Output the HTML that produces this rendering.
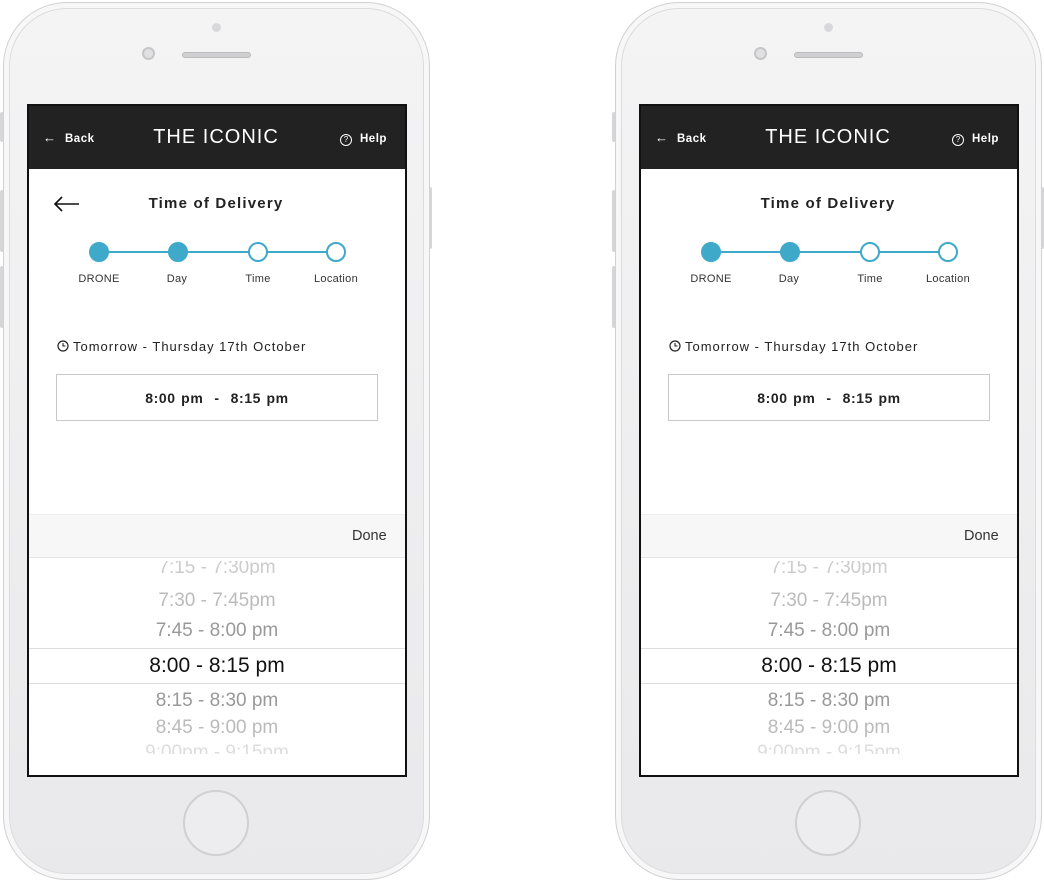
<!DOCTYPE html>
<html><head><style>
*{margin:0;padding:0;box-sizing:border-box}
body{width:1044px;height:883px;background:#fff;position:relative;overflow:hidden;font-family:"Liberation Sans",sans-serif}
.ph{position:absolute;top:0;width:432px;height:883px}
.body{position:absolute;left:3px;top:2px;width:427px;height:878px;border-radius:64px;background:linear-gradient(#f4f4f5,#e9e9eb);border:1px solid #d2d2d4;box-shadow:inset 0 0 0 5px #f7f7f8,inset 0 0 0 6px #dcdcde}
.btn{position:absolute;width:4px;background:#d6d6d8;border-radius:2px}
.scr{position:absolute;left:27px;top:104px;width:380px;height:673px;background:#fff;border:2px solid #111;overflow:hidden}
.hd{position:absolute;left:0;top:0;width:376px;height:63px;background:#222;color:#fff}
.a{position:absolute;white-space:nowrap}
.c{transform:translateX(-50%)}
.dot{position:absolute;width:20px;height:20px;border-radius:50%;border:2px solid #3fa9c9;background:#fff;top:136px}
.f{background:#3fa9c9}
.lbl{position:absolute;top:167px;font-size:11px;color:#333;transform:translateX(-50%);letter-spacing:.3px}
.pk{position:absolute;left:0;width:376px;text-align:center;font-size:19px;color:#aaa}
</style></head><body>

<div class="ph" style="left:0">
<div class="btn" style="left:0;top:112px;height:30px"></div>
<div class="btn" style="left:0;top:190px;height:62px"></div>
<div class="btn" style="left:0;top:266px;height:62px"></div>
<div class="btn" style="left:428px;top:187px;height:62px"></div>
<div class="body"></div>
<div class="a" style="left:212px;top:23px;width:9px;height:9px;border-radius:50%;background:#d8d8da"></div>
<div class="a" style="left:142px;top:47px;width:13px;height:13px;border-radius:50%;background:#e0e0e2;border:2px solid #c6c6c8"></div>
<div class="a" style="left:182px;top:52px;width:69px;height:6px;border-radius:3px;background:#d0d0d2;border:1px solid #bbb"></div>
<div class="a" style="left:183px;top:790px;width:66px;height:66px;border-radius:50%;border:2px solid #d0d0d2;background:#ededef"></div>
<div class="scr">
 <div class="hd">
  <div class="a" style="left:14px;top:24px;font-size:13px">&#8592;</div>
  <div class="a" style="left:36px;top:27px;font-size:11.5px;font-weight:bold;letter-spacing:.5px">Back</div>
  <div class="a c" style="left:187px;top:20px;font-size:20px;letter-spacing:1px">THE ICONIC</div>
  <div class="a" style="left:311px;top:28px;width:12px;height:12px;border-radius:50%;border:1px solid #fff;font-size:8px;text-align:center;line-height:10px">?</div>
  <div class="a" style="left:331px;top:27px;font-size:11.5px;font-weight:bold;letter-spacing:.5px">Help</div>
 </div>
 <svg class="a" style="left:24px;top:90px" width="28" height="16"><path d="M2 8H26M9 1L2 8l7 7" stroke="#111" stroke-width="1.6" fill="none"/></svg>
 <div class="a c" style="left:187px;top:89px;font-size:15px;font-weight:bold;color:#222;letter-spacing:1.2px">Time of Delivery</div>
 <div class="a" style="left:70px;top:145px;width:237px;height:2px;background:#3fa9c9"></div>
 <div class="dot f" style="left:60px"></div><div class="dot f" style="left:139px"></div>
 <div class="dot" style="left:219px"></div><div class="dot" style="left:297px"></div>
 <div class="lbl" style="left:70px">DRONE</div><div class="lbl" style="left:148px">Day</div>
 <div class="lbl" style="left:229px">Time</div><div class="lbl" style="left:307px">Location</div>
 <svg class="a" style="left:28px;top:234px" width="12" height="12"><circle cx="6" cy="6" r="5" stroke="#222" stroke-width="1.2" fill="none"/><path d="M6 3v3h2.5" stroke="#222" stroke-width="1.1" fill="none"/></svg>
 <div class="a" style="left:44px;top:233px;font-size:13px;color:#222;letter-spacing:1px">Tomorrow - Thursday 17th October</div>
 <div class="a" style="left:27px;top:268px;width:322px;height:47px;border:1px solid #c8c8c8"></div>
 <div class="a c" style="left:188px;top:284px;font-size:14px;font-weight:bold;color:#222;letter-spacing:.6px;word-spacing:1px">8:00 pm &nbsp;- &nbsp;8:15 pm</div>
 <div class="a" style="left:0;top:408px;width:376px;height:44px;background:#f7f7f7;border-top:1px solid #eee;border-bottom:1px solid #e4e4e4"></div>
 <div class="a" style="left:323px;top:422px;font-size:14.5px;color:#333">Done</div>
 <div class="pk" style="top:455px;color:#ccc;height:14px;overflow:hidden"><div style="margin-top:-4px">7:15 - 7:30pm</div></div>
 <div class="pk" style="top:484px;color:#bbb">7:30 - 7:45pm</div>
 <div class="pk" style="top:514px;color:#999">7:45 - 8:00 pm</div>
 <div class="a" style="left:0;top:542px;width:376px;height:1px;background:#ddd"></div>
 <div class="pk" style="top:548px;color:#111;font-size:21px">8:00 - 8:15 pm</div>
 <div class="a" style="left:0;top:577px;width:376px;height:1px;background:#ddd"></div>
 <div class="pk" style="top:584px;color:#999">8:15 - 8:30 pm</div>
 <div class="pk" style="top:611px;color:#bbb">8:45 - 9:00 pm</div>
 <div class="pk" style="top:636px;color:#ddd;height:12px;overflow:hidden">9:00pm - 9:15pm</div>
</div>
</div>

<div class="ph" style="left:612px">
<div class="btn" style="left:0;top:112px;height:30px"></div>
<div class="btn" style="left:0;top:190px;height:62px"></div>
<div class="btn" style="left:0;top:266px;height:62px"></div>
<div class="btn" style="left:428px;top:187px;height:62px"></div>
<div class="body"></div>
<div class="a" style="left:212px;top:23px;width:9px;height:9px;border-radius:50%;background:#d8d8da"></div>
<div class="a" style="left:142px;top:47px;width:13px;height:13px;border-radius:50%;background:#e0e0e2;border:2px solid #c6c6c8"></div>
<div class="a" style="left:182px;top:52px;width:69px;height:6px;border-radius:3px;background:#d0d0d2;border:1px solid #bbb"></div>
<div class="a" style="left:183px;top:790px;width:66px;height:66px;border-radius:50%;border:2px solid #d0d0d2;background:#ededef"></div>
<div class="scr">
 <div class="hd">
  <div class="a" style="left:14px;top:24px;font-size:13px">&#8592;</div>
  <div class="a" style="left:36px;top:27px;font-size:11.5px;font-weight:bold;letter-spacing:.5px">Back</div>
  <div class="a c" style="left:187px;top:20px;font-size:20px;letter-spacing:1px">THE ICONIC</div>
  <div class="a" style="left:311px;top:28px;width:12px;height:12px;border-radius:50%;border:1px solid #fff;font-size:8px;text-align:center;line-height:10px">?</div>
  <div class="a" style="left:331px;top:27px;font-size:11.5px;font-weight:bold;letter-spacing:.5px">Help</div>
 </div>
 <div class="a c" style="left:187px;top:89px;font-size:15px;font-weight:bold;color:#222;letter-spacing:1.2px">Time of Delivery</div>
 <div class="a" style="left:70px;top:145px;width:237px;height:2px;background:#3fa9c9"></div>
 <div class="dot f" style="left:60px"></div><div class="dot f" style="left:139px"></div>
 <div class="dot" style="left:219px"></div><div class="dot" style="left:297px"></div>
 <div class="lbl" style="left:70px">DRONE</div><div class="lbl" style="left:148px">Day</div>
 <div class="lbl" style="left:229px">Time</div><div class="lbl" style="left:307px">Location</div>
 <svg class="a" style="left:28px;top:234px" width="12" height="12"><circle cx="6" cy="6" r="5" stroke="#222" stroke-width="1.2" fill="none"/><path d="M6 3v3h2.5" stroke="#222" stroke-width="1.1" fill="none"/></svg>
 <div class="a" style="left:44px;top:233px;font-size:13px;color:#222;letter-spacing:1px">Tomorrow - Thursday 17th October</div>
 <div class="a" style="left:27px;top:268px;width:322px;height:47px;border:1px solid #c8c8c8"></div>
 <div class="a c" style="left:188px;top:284px;font-size:14px;font-weight:bold;color:#222;letter-spacing:.6px;word-spacing:1px">8:00 pm &nbsp;- &nbsp;8:15 pm</div>
 <div class="a" style="left:0;top:408px;width:376px;height:44px;background:#f7f7f7;border-top:1px solid #eee;border-bottom:1px solid #e4e4e4"></div>
 <div class="a" style="left:323px;top:422px;font-size:14.5px;color:#333">Done</div>
 <div class="pk" style="top:455px;color:#ccc;height:14px;overflow:hidden"><div style="margin-top:-4px">7:15 - 7:30pm</div></div>
 <div class="pk" style="top:484px;color:#bbb">7:30 - 7:45pm</div>
 <div class="pk" style="top:514px;color:#999">7:45 - 8:00 pm</div>
 <div class="a" style="left:0;top:542px;width:376px;height:1px;background:#ddd"></div>
 <div class="pk" style="top:548px;color:#111;font-size:21px">8:00 - 8:15 pm</div>
 <div class="a" style="left:0;top:577px;width:376px;height:1px;background:#ddd"></div>
 <div class="pk" style="top:584px;color:#999">8:15 - 8:30 pm</div>
 <div class="pk" style="top:611px;color:#bbb">8:45 - 9:00 pm</div>
 <div class="pk" style="top:636px;color:#ddd;height:12px;overflow:hidden">9:00pm - 9:15pm</div>
</div>
</div>
</body></html>
